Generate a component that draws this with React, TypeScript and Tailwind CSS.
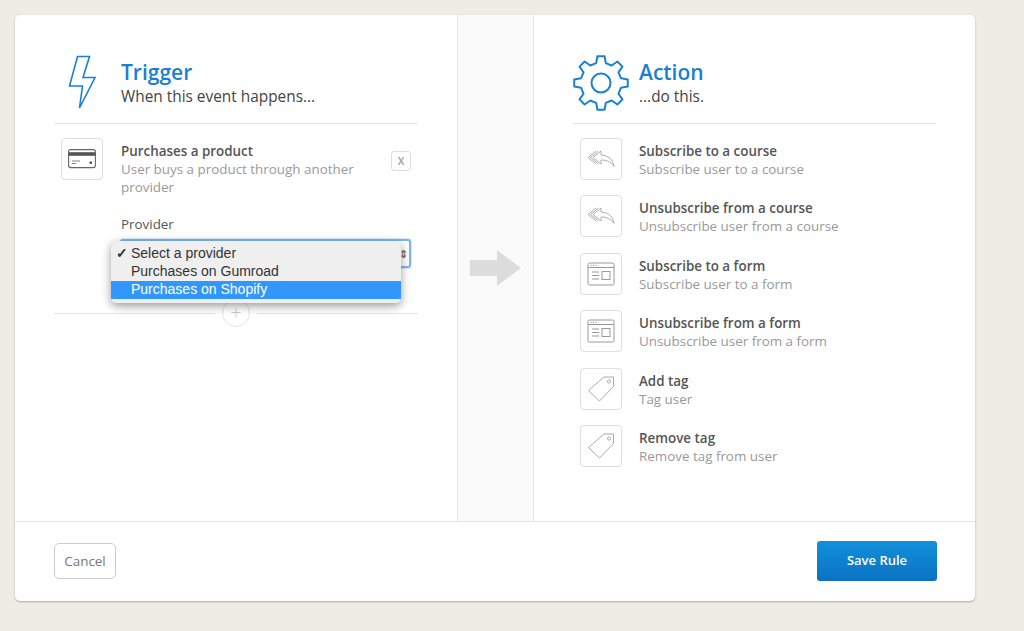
import type { ReactNode } from 'react'

const sans = "font-['Open_Sans',sans-serif]"

function gearPath() {
  const cx = 30
  const cy = 30
  const teeth = 8
  const outer = 27
  const inner = 20.5
  let d = ''
  for (let i = 0; i < teeth; i++) {
    const a = (i / teeth) * Math.PI * 2 - Math.PI / 2
    const step = (Math.PI * 2) / teeth
    const pts: [number, number][] = [
      [inner, a - step * 0.3],
      [outer, a - step * 0.17],
      [outer, a + step * 0.17],
      [inner, a + step * 0.3],
    ]
    pts.forEach(([r, t], j) => {
      const x = (cx + r * Math.cos(t)).toFixed(2)
      const y = (cy + r * Math.sin(t)).toFixed(2)
      d += i === 0 && j === 0 ? `M${x} ${y}` : `L${x} ${y}`
    })
  }
  return d + 'Z'
}

function Bolt() {
  return (
    <svg className="mt-[1px] ml-[14px]" width="30" height="56" viewBox="0 0 30 56" fill="none" stroke="#1a80d2" strokeWidth="1.6" strokeLinejoin="miter">
      <path d="M9.5 1.5H21.5L15 22.5H27L11.5 53L14.5 31H1.5Z" />
    </svg>
  )
}

function Gear() {
  return (
    <svg className="mt-[1px] ml-[-2px] shrink-0" width="60" height="60" viewBox="0 0 60 60" fill="none" stroke="#1a80d2" strokeWidth="2" strokeLinejoin="round">
      <path d={gearPath()} />
      <circle cx="30" cy="30" r="9.5" />
    </svg>
  )
}

function CardIcon() {
  return (
    <svg width="28" height="20" viewBox="0 0 28 20" fill="none">
      <rect x="0.6" y="0.6" width="26.8" height="18" rx="2" stroke="#666" strokeWidth="1.1" />
      <rect x="0.6" y="3.2" width="26.8" height="3.6" fill="#555" />
      <path d="M4 12H12M4 14.5H8" stroke="#777" strokeWidth="0.9" />
      <rect x="21.5" y="12.5" width="2.6" height="2.4" fill="#555" />
    </svg>
  )
}

function ReplyIcon() {
  return (
    <svg width="28" height="18" viewBox="0 0 28 18" fill="none" stroke="#a5a5a5" strokeWidth="0.9" strokeLinejoin="round">
      <path d="M9 1L1 7.5L9 14" />
      <path d="M11.5 1L3.5 7.5L11.5 14" />
      <path d="M14 1L6 7.5L14 14V10C19.5 10 23.5 11.5 27 16.5C26 9.5 21.5 5.5 14 5Z" />
    </svg>
  )
}

function FormIcon() {
  return (
    <svg width="28" height="24" viewBox="0 0 28 24" fill="none" stroke="#999" strokeWidth="1">
      <rect x="1" y="1" width="26" height="22" rx="1.5" />
      <path d="M1 5.5H27" />
      <path d="M3.5 3.3H4.5M6 3.3H7M8.5 3.3H9.5" stroke="#777" />
      <path d="M5 10H12M5 13.5H12M5 17H12" />
      <rect x="15" y="9.5" width="8" height="8" />
    </svg>
  )
}

function TagIcon() {
  return (
    <svg width="28" height="28" viewBox="0 0 28 28" fill="none" stroke="#aaa" strokeWidth="1" strokeLinejoin="round">
      <path d="M17 2H26.5V11.5L12.5 26L1.5 15.5Z" />
      <circle cx="22" cy="6.5" r="1.6" />
    </svg>
  )
}

function Arrow() {
  return (
    <svg width="51" height="36" viewBox="0 0 51 36" fill="#dcdcdc">
      <path d="M0 10H27V0L51 18L27 36V26H0Z" />
    </svg>
  )
}

function IconBox({ children }: { children: ReactNode }) {
  return (
    <div className="flex h-[42px] w-[42px] shrink-0 items-center justify-center rounded-[4px] border border-[#dedede] bg-white">
      {children}
    </div>
  )
}

function Item({ icon, title, text }: { icon: ReactNode; title: string; text: string }) {
  return (
    <div className="flex gap-[17px]">
      <IconBox>{icon}</IconBox>
      <div className="pt-1 text-[13.4px] leading-[18px]">
        <p className="font-semibold text-[#555]">{title}</p>
        <p className="text-[#999]">{text}</p>
      </div>
    </div>
  )
}

function PanelHead({ icon, iconWidth, title, sub }: { icon: ReactNode; iconWidth: string; title: string; sub: string }) {
  return (
    <div className="flex h-[109px] items-center border-b border-[#e5e5e5] pt-[41px] pb-[14px]">
      <div className={`flex shrink-0 items-center ${iconWidth}`}>{icon}</div>
      <div>
        <h2 className="text-[21px] leading-[28px] font-semibold text-[#1a7fd0]">{title}</h2>
        <p className="mt-[1px] text-[15.4px] leading-[20px] text-[#444]">{sub}</p>
      </div>
    </div>
  )
}

const actions = [
  { icon: <ReplyIcon />, title: 'Subscribe to a course', text: 'Subscribe user to a course' },
  { icon: <ReplyIcon />, title: 'Unsubscribe from a course', text: 'Unsubscribe user from a course' },
  { icon: <FormIcon />, title: 'Subscribe to a form', text: 'Subscribe user to a form' },
  { icon: <FormIcon />, title: 'Unsubscribe from a form', text: 'Unsubscribe user from a form' },
  { icon: <TagIcon />, title: 'Add tag', text: 'Tag user' },
  { icon: <TagIcon />, title: 'Remove tag', text: 'Remove tag from user' },
]

export default function App() {
  return (
    <div className={`h-[631px] overflow-hidden bg-[#efece5] pt-[15px] pl-[15px] ${sans}`}>
      <div className="flex h-[586px] w-[960px] flex-col rounded-[5px] bg-white shadow-[0_1px_2px_rgba(90,85,70,0.45)]">
        <div className="flex h-[507px] border-b border-[#e5e5e5]">
          {/* Trigger */}
          <div className="w-[442px] px-[39px]">
            <PanelHead icon={<Bolt />} iconWidth="w-[67px]" title="Trigger" sub="When this event happens..." />
            <div className="flex gap-[18px] pt-[14px] pr-[7px] pl-[7px]">
              <IconBox><CardIcon /></IconBox>
              <div className="w-[250px] pt-1 text-[13.4px] leading-[18px]">
                <p className="font-semibold text-[#555]">Purchases a product</p>
                <p className="text-[#999]">User buys a product through another provider</p>
              </div>
              <div className="mt-[13px] ml-auto flex h-[20px] w-[20px] items-center justify-center rounded-[3px] border border-[#ddd] text-[10px] font-bold text-[#aaa]">
                X
              </div>
            </div>
            <div className="relative ml-[66px] w-[291px] pt-[19px]">
              <p className="pl-[1px] text-[13.4px] leading-[18px] text-[#555]">Provider</p>
              <div className="mt-[6px] flex h-[29px] items-center justify-end rounded-[3px] border-2 border-[#7fb5ee] pr-[1px] text-[11px] leading-none text-[#444] shadow-[0_0_2px_#7fb5ee]">
                ⇕
              </div>
              {/* native menu over the select */}
              <div className="absolute top-[45px] left-[-9px] z-10 w-[290px] rounded-[5px] bg-[#efefef] py-[4px] font-['Liberation_Sans',sans-serif] text-[14px] text-[#333] shadow-[0_3px_10px_rgba(0,0,0,0.4)]">
                <div className="relative pb-[2px] pl-[20px] leading-[16px]">
                  <span className="absolute left-[5px] font-bold">✓</span>
                  Select a provider
                </div>
                <div className="pb-[2px] pl-[20px] leading-[16px]">Purchases on Gumroad</div>
                <div className="bg-[#3297fd] pb-[2px] pl-[20px] leading-[16px] text-white">Purchases on Shopify</div>
              </div>
            </div>
            <div className="relative mt-[45px] border-b border-[#e5e5e5]">
              <div className="absolute top-[-14px] left-[168px] flex h-[28px] w-[28px] items-center justify-center rounded-full border border-[#e2e2e2] bg-white text-[20px] leading-none font-light text-[#ccc] outline-[7px] outline-white">
                +
              </div>
            </div>
          </div>

          <div className="flex w-[77px] items-center justify-center border-x border-[#e5e5e5] bg-[#fafafa]">
            <Arrow />
          </div>

          {/* Action */}
          <div className="w-[441px] px-[39px]">
            <PanelHead icon={<Gear />} iconWidth="w-[66px]" title="Action" sub="...do this." />
            <div className="flex flex-col gap-[15.6px] pt-[13.5px] pl-[7px]">
              {actions.map(a => (
                <Item key={a.title} icon={a.icon} title={a.title} text={a.text} />
              ))}
            </div>
          </div>
        </div>

        <div className="flex flex-1 items-center justify-between pr-[38px] pl-[39px]">
          <button className="mb-[1px] h-[36px] w-[62px] rounded-[5px] border border-[#ccc] bg-white text-[13.4px] text-[#777]">
            Cancel
          </button>
          <button className="mb-[1px] h-[40px] w-[120px] rounded-[3px] bg-gradient-to-b from-[#1390d9] to-[#0b72c4] text-[13px] font-semibold text-white">
            Save Rule
          </button>
        </div>
      </div>
    </div>
  )
}
